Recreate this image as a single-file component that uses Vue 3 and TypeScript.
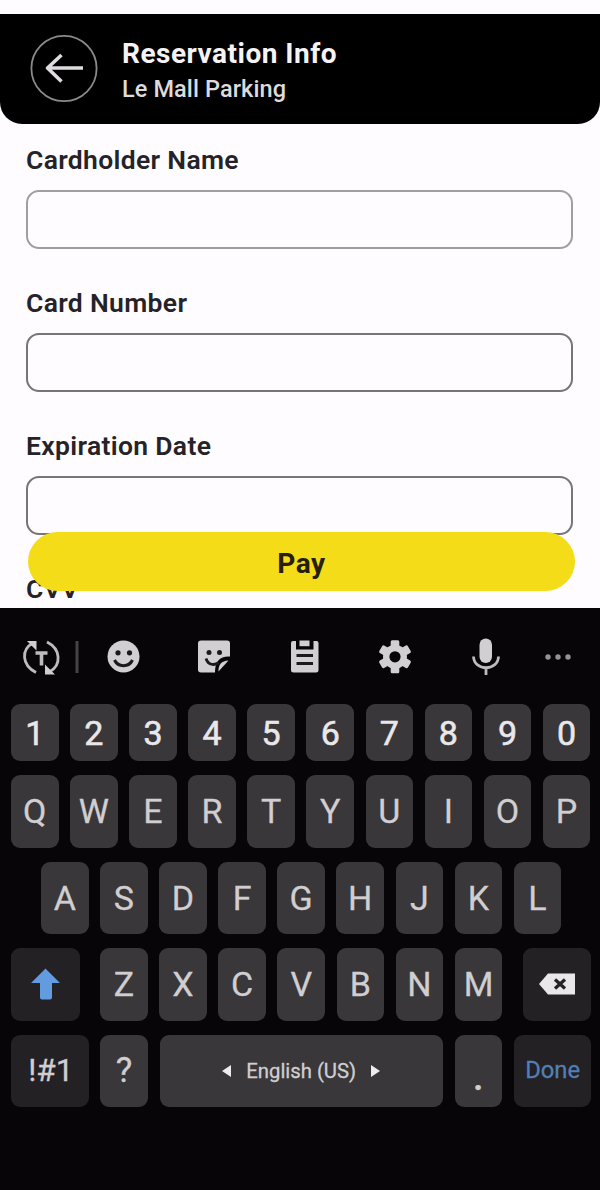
<script setup lang="ts">
const fields: string[] = ['Cardholder Name', 'Card Number', 'Expiration Date', 'CVV']
const digits: string[] = '1234567890'.split('')
const top: string[] = 'QWERTYUIOP'.split('')
const home: string[] = 'ASDFGHJKL'.split('')
const bottom: string[] = 'ZXCVBNM'.split('')
</script>

<template>
  <div class="screen">
    <header class="header">
      <button class="back" aria-label="Back">
        <svg width="68" height="68" viewBox="0 0 68 68" fill="none">
          <circle cx="34" cy="33.500" r="32.600" stroke="#8c8a8d" stroke-width="1.800" />
          <path d="M53 33H17.500M31.500 20L17.500 33L31.500 46.500" stroke="#dedcde" stroke-width="3.600" stroke-linejoin="round" />
        </svg>
      </button>
      <div class="titles">
        <h1>Reservation Info</h1>
        <p>Le Mall Parking</p>
      </div>
    </header>

    <main class="form">
      <div v-for="(label, i) in fields" :key="label" class="field">
        <label :for="'field-' + i">{{ label }}</label>
        <input :id="'field-' + i" type="text" :class="{ light: i === 0 }" />
      </div>
      <button class="pay">Pay</button>
    </main>

    <section class="keyboard">
      <div class="toolbar">
        <svg width="600" height="88" viewBox="0 608 600 88" fill="none">
          <g stroke="#bdbbbd" stroke-width="2.800">
            <path d="M36 672.500C21.500 665 21 649.500 33 643" />
            <path d="M47 642C61 649 61.500 665 50 671.500" />
            <path d="M35.500 653H47.500M41.500 653V665.500" stroke-width="3.600" />
          </g>
          <path d="M27 641H36.500V650.500ZM45 664.500V674.500H55Z" fill="#cfcdcf" />
          <path d="M77 641V673" stroke="#454346" stroke-width="3" />

          <circle cx="123.500" cy="656.500" r="16" fill="#d1cfd1" />
          <circle cx="118" cy="652.800" r="2.600" fill="#1b191c" />
          <circle cx="129.500" cy="652.800" r="2.600" fill="#1b191c" />
          <path d="M114.500 660C118 667.500 129 667.500 132.500 660" stroke="#1b191c" stroke-width="3" />

          <path d="M201 640.500H227Q230 640.500 230 643.500V656.500Q215 655.500 215 672.500H201Q198 672.500 198 669.500V643.500Q198 640.500 201 640.500Z" fill="#d1cfd1" />
          <path d="M228.500 660.500Q218 661 218.500 671.500Z" fill="#d1cfd1" />
          <circle cx="209" cy="652.500" r="2.500" fill="#1b191c" />
          <circle cx="219.500" cy="652.500" r="2.500" fill="#1b191c" />
          <path d="M206 658.500C208 665 214 666 219 662.500" stroke="#1b191c" stroke-width="2.800" />

          <path d="M293 641H296V649.500H313.500V641H316.500Q318.500 641 318.500 643V670Q318.500 672.500 316 672.500H293.500Q291 672.500 291 670V643Q291 641 293 641Z" fill="#d1cfd1" />
          <rect x="299.500" y="640.500" width="10" height="5.700" fill="#d1cfd1" />
          <path d="M296.500 655.500H313M296.500 663.500H313" stroke="#1b191c" stroke-width="2.800" />

          <circle cx="395" cy="656.800" r="8.800" stroke="#d1cfd1" stroke-width="6.400" />
          <g fill="#d1cfd1">
            <rect
              v-for="angle in [0, 60, 120, 180, 240, 300]"
              :key="angle"
              x="390.700"
              y="640.300"
              width="8.600"
              height="8"
              rx="1.500"
              :transform="`rotate(${angle} 395 656.800)`"
            />
          </g>

          <rect x="479.500" y="638.500" width="12.500" height="24.500" rx="6.250" fill="#d1cfd1" />
          <path d="M473.500 656.500C474 671.500 498 671.500 498.500 656.500M486 667.500V675" stroke="#bdbbbd" stroke-width="2.800" />

          <circle cx="548" cy="657" r="2.700" fill="#949294" />
          <circle cx="558" cy="657" r="2.700" fill="#949294" />
          <circle cx="568" cy="657" r="2.700" fill="#949294" />
        </svg>
      </div>

      <div class="row digits">
        <span v-for="k in digits" :key="k" class="key">{{ k }}</span>
      </div>
      <div class="row">
        <span v-for="k in top" :key="k" class="key">{{ k }}</span>
      </div>
      <div class="row home">
        <span v-for="k in home" :key="k" class="key">{{ k }}</span>
      </div>
      <div class="row spread">
        <span class="key dark shift">
          <svg width="30" height="34" viewBox="0 0 30 34">
            <path d="M15.500 1.500L30 16H22V30.500Q22 32.500 20 32.500H12Q10 32.500 10 30.500V16H1Z" fill="#629bdf" />
          </svg>
        </span>
        <div class="letters">
          <span v-for="k in bottom" :key="k" class="key">{{ k }}</span>
        </div>
        <span class="key dark shift">
          <svg width="38" height="24" viewBox="0 0 38 24">
            <path d="M1 12L10 1.500H37V22.500H10Z" fill="#e9e7e9" />
            <path d="M17 7.500L27 16.500M27 7.500L17 16.500" stroke="#252326" stroke-width="3.200" />
          </svg>
        </span>
      </div>
      <div class="row last">
        <span class="key dark wide symbols">!#1</span>
        <span class="key question">?</span>
        <span class="key space">
          <svg width="9" height="12" viewBox="0 0 9 12"><path d="M9 0V12L0 6Z" fill="#eeecee" /></svg>
          <span class="language">English (US)</span>
          <svg width="9" height="12" viewBox="0 0 9 12"><path d="M0 0V12L9 6Z" fill="#eeecee" /></svg>
        </span>
        <span class="key period">.</span>
        <span class="key dark wide done">Done</span>
      </div>
    </section>
  </div>
</template>

<style>
body {
  margin: 0;
}
</style>

<style scoped>
* {
  box-sizing: border-box;
}

.screen {
  width: 600px;
  height: 1190px;
  padding-top: 14px;
  overflow: hidden;
  background: #fefcff;
  font-family: Roboto, 'Liberation Sans', sans-serif;
  display: flex;
  flex-direction: column;
}

.header {
  flex: none;
  height: 109.500px;
  padding: 0 0 0 30px;
  display: flex;
  align-items: center;
  gap: 24px;
  background: #000;
  border-radius: 0 0 22px 22px;
  color: #f5f3f5;
}

.back {
  width: 68px;
  height: 68px;
  padding: 0;
  border: 0;
  background: none;
}

.back svg {
  display: block;
}

.titles {
  padding-top: 5px;
}

.titles h1,
.titles p {
  margin: 0;
  white-space: nowrap;
}

.titles h1 {
  font-size: 28px;
  font-weight: 700;
  letter-spacing: 0.500px;
  line-height: 36px;
}

.titles p {
  color: #dddbdd;
  font-size: 23.500px;
  font-weight: 500;
  letter-spacing: 0.100px;
  line-height: 34px;
}

.form {
  position: relative;
  flex: none;
  height: 484.500px;
  padding: 20.500px 27px 0 26px;
  overflow: hidden;
}

.field {
  height: 143px;
}

.field label {
  display: block;
  height: 46px;
  color: #252327;
  font-size: 26.500px;
  font-weight: 600;
  letter-spacing: 0.330px;
  line-height: 31px;
}

.field input {
  display: block;
  width: 100%;
  height: 59px;
  border: 2px solid #777578;
  border-radius: 13px;
  background: transparent;
}

.field input.light {
  border-color: #a09ea1;
}

.pay {
  position: absolute;
  left: 28px;
  top: 408.500px;
  width: 547px;
  height: 58.500px;
  padding: 5px 0 0;
  border: 0;
  border-radius: 30px;
  background: #f5dc19;
  color: #261f0b;
  font: 700 28px/1 Roboto, sans-serif;
  letter-spacing: 0.500px;
}

.keyboard {
  flex: 1;
  padding: 0 9px 0 11px;
  background: #070508;
}

.toolbar {
  height: 96px;
  margin: 0 -9px 0 -11px;
}

.toolbar svg {
  display: block;
}

.row {
  display: flex;
  gap: 11.600px;
  height: 72.500px;
  margin-bottom: 14px;
}

.row.digits {
  height: 57px;
}

.row.home {
  padding-left: 30px;
}

.row.spread {
  gap: 20.700px;
}

.row.last {
  gap: 11.850px;
}

.letters {
  display: flex;
  gap: 11.600px;
}

.key {
  flex: none;
  width: 47.500px;
  display: flex;
  align-items: center;
  justify-content: center;
  border-radius: 9px;
  background: #393739;
  color: #d0ced0;
  font-size: 34px;
  line-height: 1;
  -webkit-text-stroke: 0.300px currentColor;
}

.digits .key {
  color: #e9e7e9;
  -webkit-text-stroke-width: 0.600px;
}

.key.dark {
  background: #232124;
}

.key.shift {
  width: 68.500px;
}

.key.wide {
  width: 77.500px;
}

.key.symbols {
  padding-left: 2px;
  font-size: 31.500px;
}

.key.question {
  font-size: 35px;
}

.key.space {
  width: 283px;
  gap: 15px;
}

.language {
  font-size: 20.300px;
}

.key.period {
  padding-top: 14px;
  font-weight: 700;
}

.key.done {
  color: #527fb5;
  font-size: 23.800px;
}
</style>
